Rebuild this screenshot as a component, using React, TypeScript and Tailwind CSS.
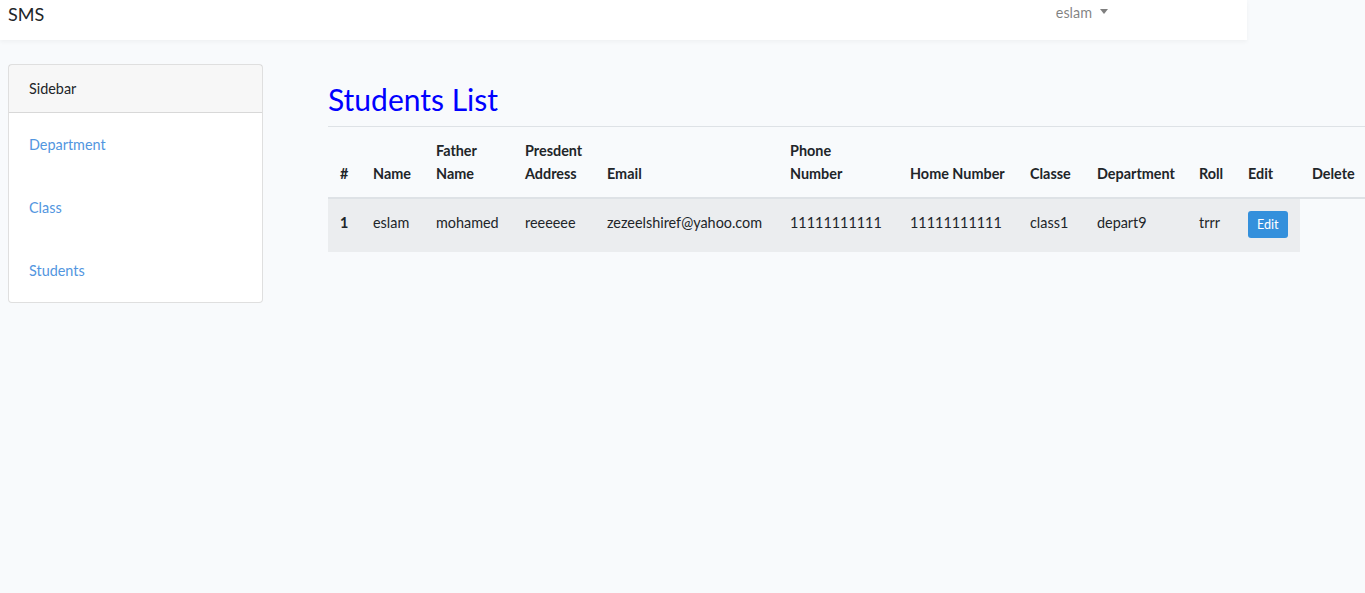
import React from 'react';

const columns = [
  { label: ['#'], w: 'w-[33px]' },
  { label: ['Name'], w: 'w-[63px]' },
  { label: ['Father', 'Name'], w: 'w-[89px]' },
  { label: ['Presdent', 'Address'], w: 'w-[82px]' },
  { label: ['Email'], w: 'w-[183px]' },
  { label: ['Phone', 'Number'], w: 'w-[120px]' },
  { label: ['Home Number'], w: 'w-[120px]' },
  { label: ['Classe'], w: 'w-[67px]' },
  { label: ['Department'], w: 'w-[102px]' },
  { label: ['Roll'], w: 'w-[49px]' },
  { label: ['Edit'], w: 'w-[64px]' },
  { label: ['Delete'], w: 'w-[66px]' },
];

const student = ['eslam', 'mohamed', 'reeeeee', 'zezeelshiref@yahoo.com', '11111111111', '11111111111', 'class1', 'depart9', 'trrr'];

const App: React.FC = () => {
  return (
    <div className="min-h-[593px] bg-[#f8fafc] overflow-x-hidden text-[14.4px] leading-[1.6] text-[#212529] font-['Lato','Noto_Sans',sans-serif]">
      {/* Navbar */}
      <nav className="w-[1247px] h-[40px] bg-white shadow-[0_2px_4px_rgba(0,0,0,0.04)] flex items-start justify-between">
        <a className="pl-[8px] pt-[1px] text-[18px] leading-[26px] text-[#212529]">SMS</a>
        <div className="mr-[139px] pt-[1px] flex items-center gap-[8px] text-[rgba(0,0,0,0.5)] leading-[23px]">
          <span>eslam</span>
          <span className="w-0 h-0 border-l-[4.5px] border-r-[4.5px] border-t-[5px] border-l-transparent border-r-transparent border-t-[rgba(0,0,0,0.5)] mb-[2px]"></span>
        </div>
      </nav>

      <div className="flex items-start pt-[24px]">
        {/* Sidebar */}
        <div className="ml-[8px] w-[255px] shrink-0 bg-white border border-[rgba(0,0,0,0.125)] rounded-[4px]">
          <div className="h-[48px] px-[20px] flex items-center bg-[rgba(0,0,0,0.03)] border-b border-[rgba(0,0,0,0.125)]">Sidebar</div>
          <ul className="px-[20px] pt-[20px] pb-[20px] flex flex-col gap-[40px] text-[#5296e0]">
            <li>Department</li>
            <li>Class</li>
            <li>Students</li>
          </ul>
        </div>

        {/* Main */}
        <main className="ml-[65px] pt-[16px]">
          <h1 className="text-[30px] leading-[38px] text-[#0000ff] mb-[8px]">Students List</h1>
          <table className="table-fixed border-collapse w-[1038px] text-left">
            <thead>
              <tr className="border-t border-[#dee2e6]">
                {columns.map((c) => (
                  <th key={c.label.join(' ')} className={`${c.w} px-[12px] py-[12px] align-bottom font-bold border-b-2 border-[#dee2e6]`}>
                    {c.label.map((l) => (
                      <div key={l}>{l}</div>
                    ))}
                  </th>
                ))}
              </tr>
            </thead>
            <tbody>
              <tr className="align-top">
                <th className="px-[12px] py-[12px] font-bold bg-[rgba(0,0,0,0.05)]">1</th>
                {student.map((v, i) => (
                  <td key={i} className="px-[12px] py-[12px] bg-[rgba(0,0,0,0.05)] whitespace-nowrap">{v}</td>
                ))}
                <td className="px-[12px] pt-[12px] pb-[14px] bg-[rgba(0,0,0,0.05)]">
                  <button className="h-[27px] bg-[#3490dc] text-white text-[12.6px] leading-[19px] px-[9px] rounded-[3px] block">Edit</button>
                </td>
              </tr>
            </tbody>
          </table>
        </main>
      </div>
    </div>
  );
};

export default App;
